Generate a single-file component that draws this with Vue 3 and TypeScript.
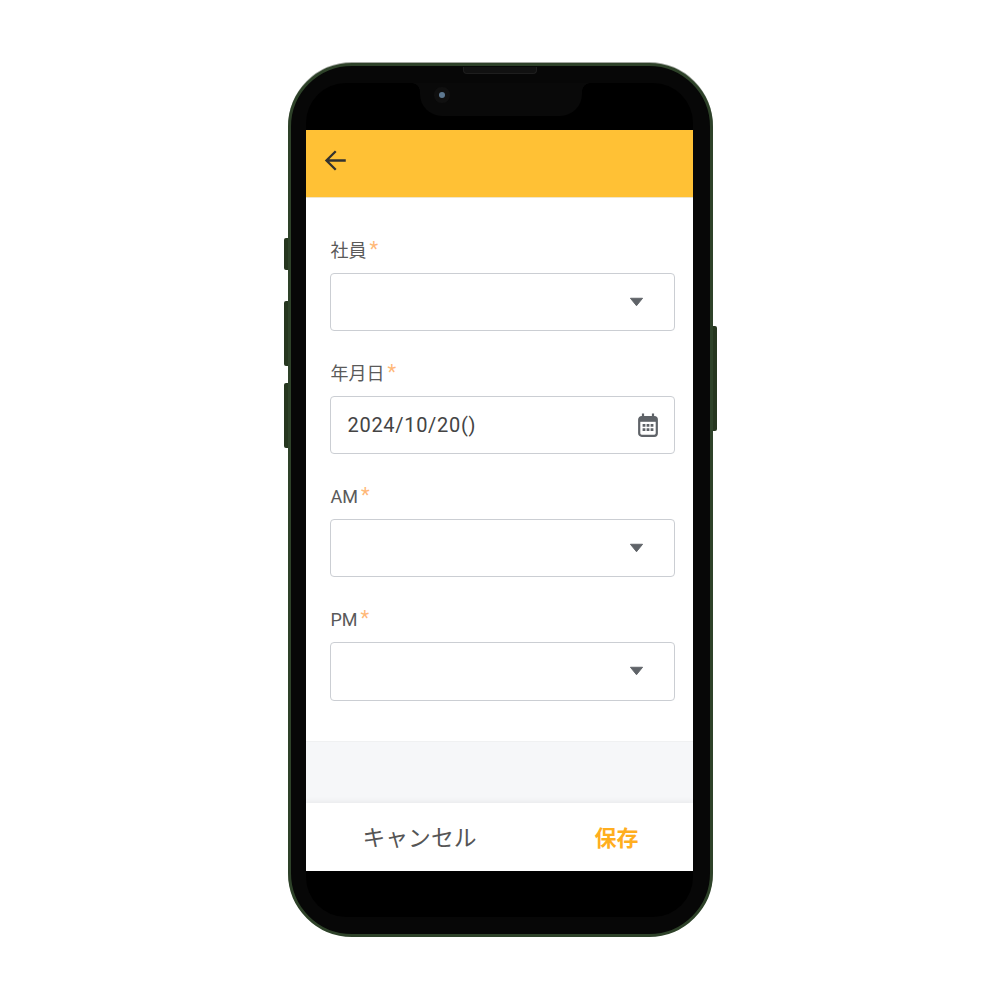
<script setup lang="ts">
interface Field {
  label: string
  value?: string
  icon: 'caret' | 'calendar'
}
const fields: Field[] = [
  { label: '社員', icon: 'caret' },
  { label: '年月日', value: '2024/10/20()', icon: 'calendar' },
  { label: 'AM', icon: 'caret' },
  { label: 'PM', icon: 'caret' },
]
</script>

<template>
  <div class="page">
    <div class="phone">
      <i class="btn b1"></i><i class="btn b2"></i><i class="btn b3"></i><i class="btn b4"></i>
      <div class="speaker"></div>
      <div class="inner">
        <div class="notch"><span class="camera"></span></div>
        <div class="screen">
          <header class="bar">
            <svg class="back" viewBox="0 0 24 24" width="29" height="29">
              <path d="M20.5 12H4.5M12.2 4.3 4.5 12l7.7 7.7" fill="none" stroke="#33322f" stroke-width="1.9" />
            </svg>
          </header>
          <main class="form">
            <div v-for="f in fields" :key="f.label" class="field">
              <label class="label">{{ f.label }}<span class="req">*</span></label>
              <div class="input">
                <span class="value">{{ f.value }}</span>
                <svg v-if="f.icon === 'caret'" class="caret" viewBox="0 0 16 10" width="15" height="10">
                  <path d="M1.5 1h13L8 9z" fill="#5f6368" stroke="#5f6368" stroke-linejoin="round" />
                </svg>
                <svg v-else class="cal" viewBox="0 0 20 24" width="20" height="24">
                  <path d="M5 0.5v5M15 0.5v5" stroke="#5f6368" stroke-width="2.2" />
                  <rect x="1.2" y="4" width="17.6" height="18.8" rx="2.5" fill="none" stroke="#5f6368" stroke-width="2.2" />
                  <path d="M1 6.8h18" stroke="#5f6368" stroke-width="4" />
                  <path d="M4.6 11h2.8v2.8H4.6zM8.6 11h2.8v2.8H8.6zM12.6 11h2.8v2.8h-2.8zM4.6 15.2h2.8V18H4.6zM8.6 15.2h2.8V18H8.6zM12.6 15.2h2.8V18h-2.8z" fill="#5f6368" />
                </svg>
              </div>
            </div>
          </main>
          <div class="band"></div>
          <footer class="foot">
            <button class="act cancel">キャンセル</button>
            <button class="act save">保存</button>
          </footer>
        </div>
      </div>
    </div>
  </div>
</template>

<style>
html, body { margin: 0; background: #fff; }
</style>

<style scoped>
.page {
  width: 1000px;
  height: 1000px;
  display: flex;
  align-items: center;
  justify-content: center;
  background: #fff;
  font-family: Roboto, "Noto Sans CJK JP", sans-serif;
}
.phone {
  position: relative;
  box-sizing: border-box;
  width: 425px;
  height: 874px;
  padding: 17px 17px 17px 15px;
  border: 3px solid #2e4229;
  border-radius: 64px;
  background: #070707;
  box-shadow: 0 -1px 0 #a5a8a3;
  display: flex;
}
.btn {
  position: absolute;
  left: -7px;
  width: 4px;
  background: #26361f;
  border-radius: 2px 0 0 2px;
}
.b1 { top: 172px; height: 32px; }
.b2 { top: 235px; height: 65px; }
.b3 { top: 317px; height: 65px; }
.b4 { left: auto; right: -7px; top: 260px; height: 105px; border-radius: 0 2px 2px 0; }
.speaker {
  position: absolute;
  top: 1px;
  left: 172px;
  width: 72px;
  height: 6px;
  background: #111;
  border: 1px solid #1e1e1e;
  border-top: 0;
  border-radius: 0 0 4px 4px;
}
.inner {
  position: relative;
  flex: 1;
  background: #000;
  border-radius: 40px;
  padding-top: 47px;
  padding-bottom: 46px;
  display: flex;
}
.notch {
  position: absolute;
  top: 0;
  left: 114px;
  width: 162px;
  height: 33px;
  background: #090909;
  border-radius: 0 0 22px 22px;
}
.notch::before,
.notch::after {
  content: "";
  position: absolute;
  top: 0;
  width: 8px;
  height: 8px;
}
.notch::before {
  left: -8px;
  background: radial-gradient(circle at 0 100%, transparent 7.5px, #090909 8px);
}
.notch::after {
  right: -8px;
  background: radial-gradient(circle at 100% 100%, transparent 7.5px, #090909 8px);
}
.camera {
  position: absolute;
  left: 19px;
  top: 9px;
  width: 6px;
  height: 6px;
  border-radius: 50%;
  background: #5d7890;
  box-shadow: 0 0 0 5px #101010;
}
.screen {
  flex: 1;
  background: #fff;
  display: flex;
  flex-direction: column;
  min-width: 0;
}
.bar {
  height: 68px;
  flex: none;
  box-sizing: border-box;
  background: #ffc135;
  border-bottom: 1px solid #f0e6cc;
  display: flex;
  align-items: center;
  padding-left: 15px;
}
.back { margin-top: -7px; }
.form {
  flex: 1;
  box-sizing: border-box;
  padding: 39px 18px 0 24px;
  display: flex;
  flex-direction: column;
  gap: 29px;
}
.field { display: flex; flex-direction: column; gap: 12px; }
.label {
  display: block;
  height: 24px;
  line-height: 26px;
  padding-left: 1px;
  font-size: 18px;
  color: #5a5a5a;
}
.req { color: #ffb878; margin-left: 3px; font-size: 20px; position: relative; top: -1px; }
.input {
  box-sizing: border-box;
  height: 58px;
  border: 1px solid #cbced3;
  border-radius: 4px;
  display: flex;
  align-items: center;
  justify-content: space-between;
  padding: 0 16px 0 17px;
}
.field:last-child .input { height: 59px; }
.value { font-size: 20px; color: #444; letter-spacing: 0.7px; }
.caret { margin-right: 14px; margin-top: -1px; }
.cal { margin-top: -1px; }
.band {
  height: 62px;
  flex: none;
  background: #f6f7f9;
  border-top: 1px solid #f0f1f2;
  box-sizing: border-box;
}
.foot {
  height: 68px;
  flex: none;
  box-sizing: border-box;
  background: #fff;
  box-shadow: 0 -2px 5px rgba(0, 0, 0, 0.05);
  position: relative;
  display: flex;
  align-items: center;
  justify-content: space-between;
  padding: 0 54px 2px 57px;
}
.act {
  border: 0;
  background: none;
  padding: 0;
  font-family: inherit;
}
.cancel { font-size: 22.8px; color: #555; }
.save { font-size: 22px; font-weight: 700; color: #ffae1f; }
</style>
